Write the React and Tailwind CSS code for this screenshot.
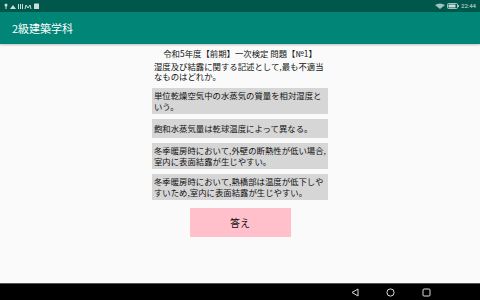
import React from "react";

const font = { fontFamily: '"Noto Sans CJK JP", "Noto Sans", sans-serif' };

function StatusBar() {
  return (
    <div className="h-[12px] bg-[#00574b] flex items-center justify-between px-[4px] text-white">
      <div className="flex items-center gap-[2px] opacity-80">
        <svg width="36" height="6" viewBox="0 0 36 6" fill="white">
          <circle cx="2" cy="2" r="1.5" />
          <rect x="1.5" y="2" width="1" height="4" />
          <path d="M6 6 L9 2 L12 6 Z" />
          <rect x="14" y="1" width="1" height="5" />
          <rect x="16" y="1" width="1" height="5" />
          <rect x="18" y="1" width="1" height="5" />
          <path d="M21 6 L22 2 L24 5 L26 2 L27 6" stroke="white" strokeWidth="1" fill="none" />
          <rect x="30" y="0.5" width="5" height="5.5" rx="0.5" />
        </svg>
      </div>
      <div className="flex items-center gap-[2px] opacity-80">
        <svg width="10" height="6" viewBox="0 0 10 6" fill="white">
          <path d="M0 2 Q5 -1 10 2 L5 6 Z" opacity="0.8" />
        </svg>
        <svg width="12" height="6" viewBox="0 0 12 6">
          <rect x="0.5" y="0.5" width="10" height="5" rx="1" stroke="white" fill="none" strokeWidth="0.8" />
          <rect x="1.5" y="1.5" width="7" height="3" fill="white" />
          <rect x="10.8" y="2" width="1" height="2" fill="white" />
        </svg>
        <span className="text-[6px] leading-none" style={{ fontFamily: '"Roboto", sans-serif' }}>22:44</span>
      </div>
    </div>
  );
}

function Option({ children }) {
  return (
    <div className="bg-[#d6d6d6] pl-[2px] pr-0 py-[2px] text-[8.4px] leading-[11px] text-[#111]">
      {children}
    </div>
  );
}

export default function App() {
  return (
    <div className="w-[480px] h-[300px] flex flex-col overflow-hidden" style={font}>
      <StatusBar />
      <div className="h-[32px] bg-[#008577] flex items-center pl-[12px] shadow-[0_1px_2px_rgba(0,0,0,0.25)] relative z-10">
        <span className="text-white text-[11px] leading-none">2級建築学科</span>
      </div>
      <div className="flex-1 bg-[#fafafa] flex justify-center">
        <div className="w-[176px] flex flex-col pt-[4px]">
          <div className="text-center text-[8.4px] leading-[11px] text-[#111]">令和5年度【前期】一次検定 問題【№1】</div>
          <div className="mt-[2px] text-[8.4px] leading-[10px] text-[#111] pl-[2px]">
            湿度及び結露に関する記述として,最も不適当なものはどれか。
          </div>
          <div className="mt-[7px] flex flex-col gap-[5px]">
            <Option>単位乾燥空気中の水蒸気の質量を相対湿度という。</Option>
            <div className="bg-[#d6d6d6] pl-[2px] py-[4px] text-[8.4px] leading-[11px] text-[#111]">
              飽和水蒸気量は乾球温度によって異なる。
            </div>
            <Option>冬季暖房時において,外壁の断熱性が低い場合,室内に表面結露が生じやすい。</Option>
            <Option>冬季暖房時において,熱橋部は温度が低下しやすいため,室内に表面結露が生じやすい。</Option>
          </div>
          <div className="mt-[8px] flex justify-center">
            <div className="w-[101px] h-[29px] bg-[#ffc0cb] flex items-center justify-center text-[10px] text-[#111]">
              答え
            </div>
          </div>
        </div>
      </div>
      <div className="h-[17px] bg-black border-t border-[#555] flex items-center justify-end">
        <div className="flex items-center gap-[27px] pr-[49px]">
          <svg width="8" height="9" viewBox="0 0 8 9">
            <path d="M1 4.5 L7 1 L7 8 Z" stroke="#ddd" strokeWidth="1" fill="none" strokeLinejoin="round" />
          </svg>
          <svg width="9" height="9" viewBox="0 0 9 9">
            <circle cx="4.5" cy="4.5" r="3.6" stroke="#ddd" strokeWidth="1" fill="none" />
          </svg>
          <svg width="9" height="9" viewBox="0 0 9 9">
            <rect x="1" y="1" width="7" height="7" rx="1" stroke="#ddd" strokeWidth="1" fill="none" />
          </svg>
        </div>
      </div>
    </div>
  );
}
